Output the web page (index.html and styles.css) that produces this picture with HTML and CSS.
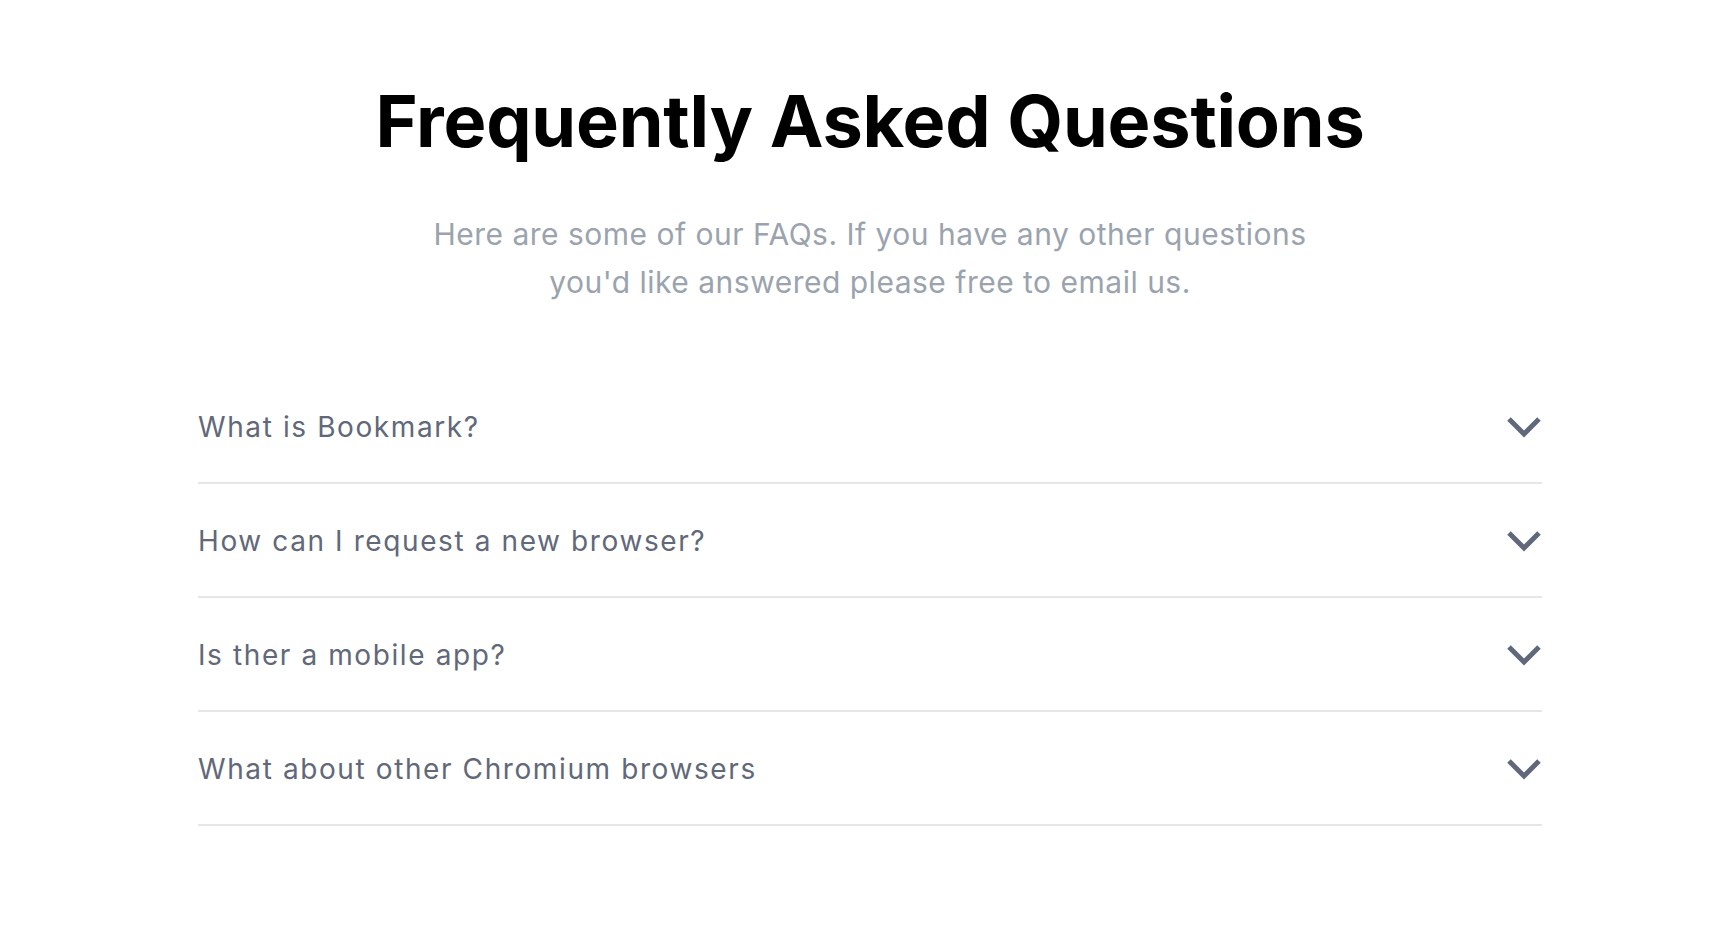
FILE: index.html
```html
<!DOCTYPE html>
<html lang="en">
<head>
<meta charset="utf-8">
<title>FAQ</title>
<link rel="stylesheet" href="styles.css">
</head>
<body>
<section class="faq">
  <h1 class="faq-title">Frequently Asked Questions</h1>
  <p class="faq-intro">Here are some of our FAQs. If you have any other questions you'd like answered please free to email us.</p>
  <ul class="faq-list">
    <li class="faq-item">
      <span class="faq-question">What is Bookmark?</span>
      <svg class="faq-chevron" viewBox="0 0 36 23" width="36" height="23" aria-hidden="true"><path d="M3 3 L18 18 L33 3" fill="none" stroke="currentColor" stroke-width="5"/></svg>
    </li>
    <li class="faq-item">
      <span class="faq-question">How can I request a new browser?</span>
      <svg class="faq-chevron" viewBox="0 0 36 23" width="36" height="23" aria-hidden="true"><path d="M3 3 L18 18 L33 3" fill="none" stroke="currentColor" stroke-width="5"/></svg>
    </li>
    <li class="faq-item">
      <span class="faq-question">Is ther a mobile app?</span>
      <svg class="faq-chevron" viewBox="0 0 36 23" width="36" height="23" aria-hidden="true"><path d="M3 3 L18 18 L33 3" fill="none" stroke="currentColor" stroke-width="5"/></svg>
    </li>
    <li class="faq-item">
      <span class="faq-question">What about other Chromium browsers</span>
      <svg class="faq-chevron" viewBox="0 0 36 23" width="36" height="23" aria-hidden="true"><path d="M3 3 L18 18 L33 3" fill="none" stroke="currentColor" stroke-width="5"/></svg>
    </li>
  </ul>
</section>
</body>
</html>
```
FILE: styles.css
```css
html, body {
  margin: 0;
  padding: 0;
  background: #ffffff;
}

body {
  font-family: Inter, "Noto Sans", sans-serif;
  padding-left: 24px;
}

.faq {
  max-width: 1344px;
  margin: 0 auto;
  padding-top: 78px;
  display: flex;
  flex-direction: column;
  align-items: center;
}

.faq-title {
  margin: 0;
  font-size: 72px;
  line-height: 86px;
  font-weight: 700;
  color: #000000;
  letter-spacing: -0.2px;
  text-align: center;
}

.faq-intro {
  margin: 46px 0 0;
  max-width: 930px;
  font-size: 30px;
  line-height: 48px;
  letter-spacing: 0.5px;
  color: #9aa3ae;
  text-align: center;
}

.faq-list {
  list-style: none;
  margin: 64px 0 0;
  padding: 0;
  align-self: stretch;
}

.faq-item {
  display: flex;
  align-items: center;
  justify-content: space-between;
  padding: 41px 0 39px;
  border-bottom: 2px solid #e6e6ea;
  color: #616879;
}

.faq-question {
  font-size: 28px;
  line-height: 32px;
  letter-spacing: 1.6px;
}

.faq-chevron {
  display: block;
  flex: none;
}
```
